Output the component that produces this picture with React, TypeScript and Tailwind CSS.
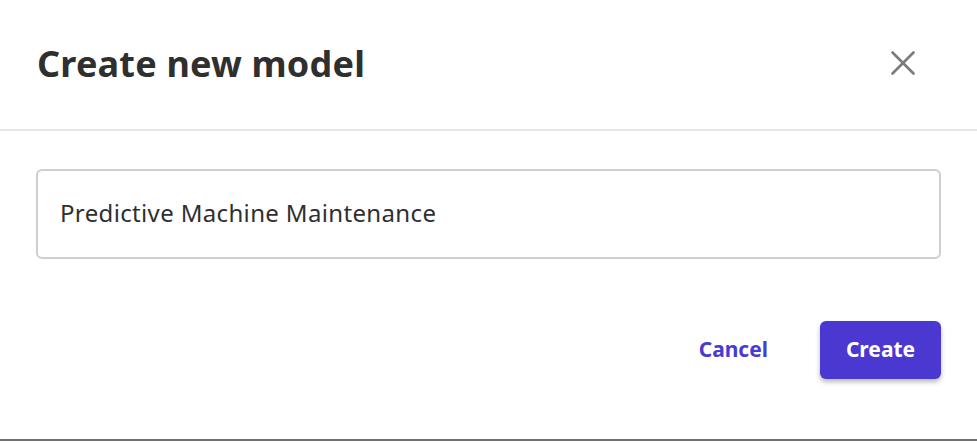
import { X } from "lucide-react";

export default function App() {
  return (
    <div className="h-[443px] w-[977px] bg-white" style={{ fontFamily: '"Noto Sans", "Open Sans", sans-serif' }}>
      <div className="flex h-[441px] flex-col border-b-2 border-[#6f6f6f]">
        <div className="flex h-[131px] items-center justify-between border-b-2 border-[#e6e6e6] pl-[37px] pr-[53px]">
          <h1 className="pb-[2px] text-[36px] font-bold tracking-[0.2px] text-[#2f2f2f]">Create new model</h1>
          <button type="button" aria-label="Close" className="-mt-[3px] text-[#7b7b7b]">
            <X size={42} strokeWidth={1.5} />
          </button>
        </div>

        <div className="px-[36px] pt-[38px]">
          <div className="flex h-[90px] items-center rounded-[6px] border-2 border-[#cfcfcf] px-[22px] pb-[2px] text-[24px] tracking-[0.35px] text-[#2f2f2f]">
            Predictive Machine Maintenance
          </div>
        </div>

        <div className="mt-[62px] flex items-center justify-end gap-[52px] pr-[36px]">
          <button type="button" className="text-[21px] font-bold text-[#4a3bcf]">
            Cancel
          </button>
          <button
            type="button"
            className="flex h-[58px] w-[121px] items-center justify-center rounded-[6px] bg-[#4a38d0] text-[21px] font-bold text-white shadow-[0_3px_5px_rgba(0,0,0,0.28)]"
          >
            Create
          </button>
        </div>
      </div>
    </div>
  );
}
